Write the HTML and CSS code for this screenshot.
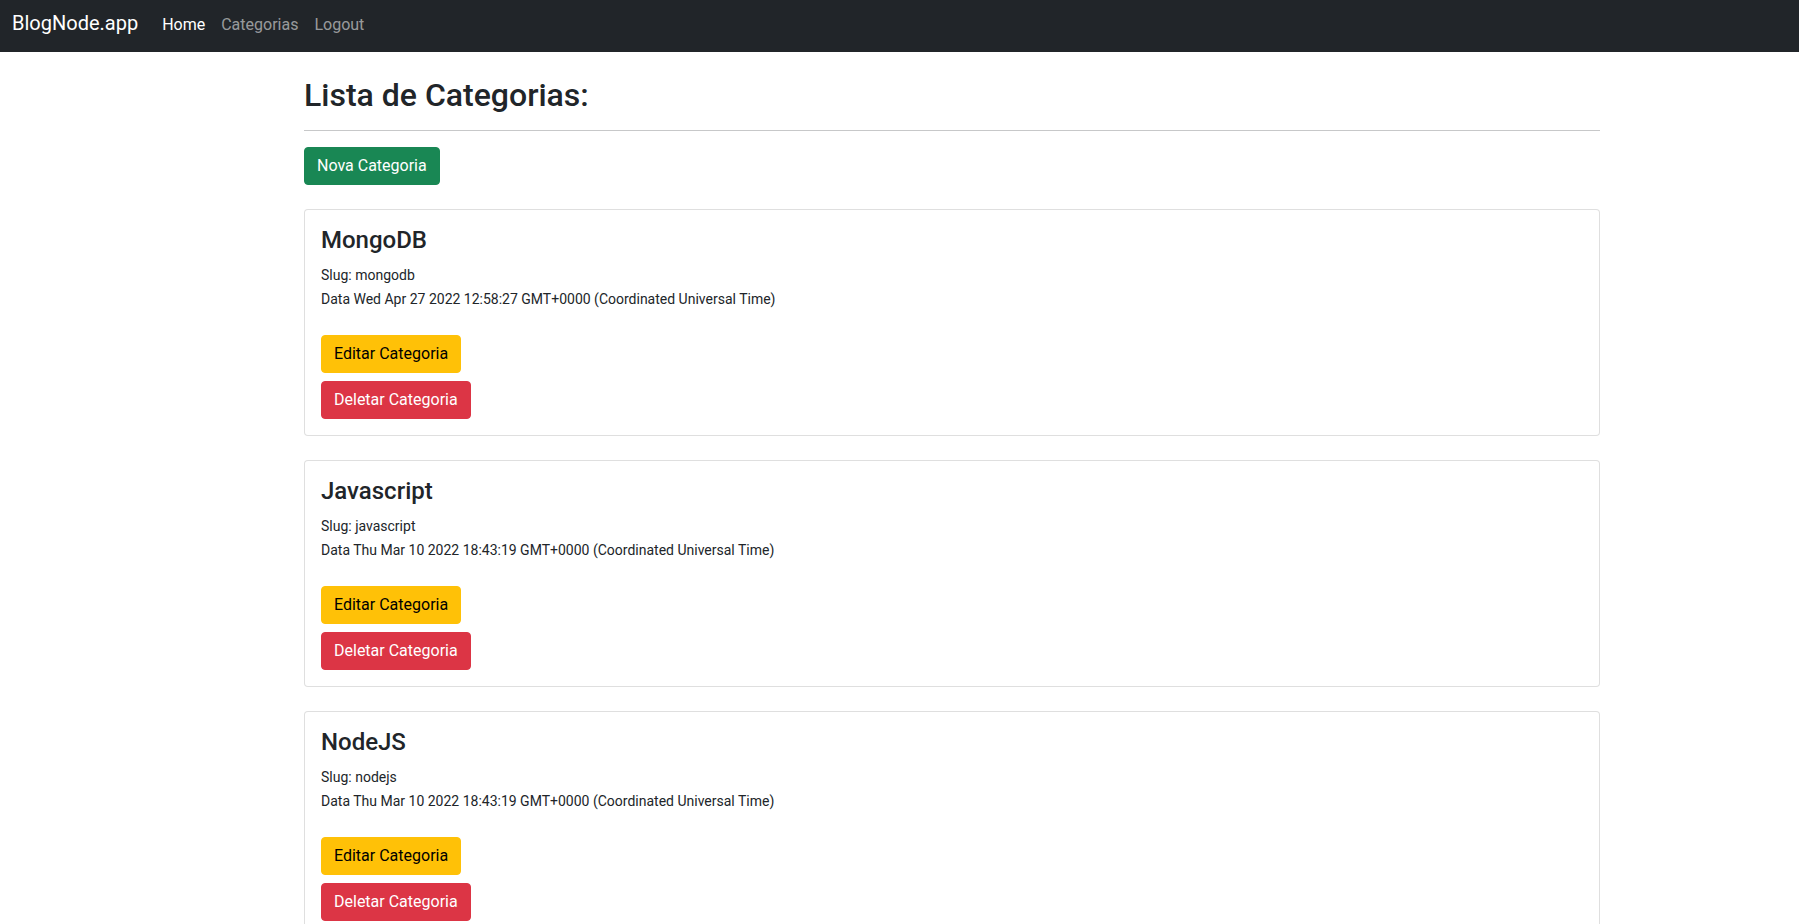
FILE: index.html
```html
<!DOCTYPE html>
<html lang="pt-BR">
<head>
<meta charset="utf-8">
<title>BlogNode.app</title>
<link rel="stylesheet" href="styles.css">
</head>
<body>
<nav class="navbar">
  <a class="brand" href="#">BlogNode.app</a>
  <ul class="nav">
    <li><a class="nav-link active" href="#">Home</a></li>
    <li><a class="nav-link" href="#">Categorias</a></li>
    <li><a class="nav-link" href="#">Logout</a></li>
  </ul>
</nav>

<main class="container">
  <h2 class="page-title">Lista de Categorias:</h2>
  <hr class="divider">
  <a class="btn btn-success" href="#">Nova Categoria</a>

  <div class="card">
    <div class="card-body">
      <h4 class="card-title">MongoDB</h4>
      <p class="meta"><small>Slug: mongodb</small><br><small>Data Wed Apr 27 2022 12:58:27 GMT+0000 (Coordinated Universal Time)</small></p>
      <div class="actions">
        <a class="btn btn-warning" href="#">Editar Categoria</a>
        <button class="btn btn-danger" type="button">Deletar Categoria</button>
      </div>
    </div>
  </div>

  <div class="card">
    <div class="card-body">
      <h4 class="card-title">Javascript</h4>
      <p class="meta"><small>Slug: javascript</small><br><small>Data Thu Mar 10 2022 18:43:19 GMT+0000 (Coordinated Universal Time)</small></p>
      <div class="actions">
        <a class="btn btn-warning" href="#">Editar Categoria</a>
        <button class="btn btn-danger" type="button">Deletar Categoria</button>
      </div>
    </div>
  </div>

  <div class="card">
    <div class="card-body">
      <h4 class="card-title">NodeJS</h4>
      <p class="meta"><small>Slug: nodejs</small><br><small>Data Thu Mar 10 2022 18:43:19 GMT+0000 (Coordinated Universal Time)</small></p>
      <div class="actions">
        <a class="btn btn-warning" href="#">Editar Categoria</a>
        <button class="btn btn-danger" type="button">Deletar Categoria</button>
      </div>
    </div>
  </div>
</main>
</body>
</html>
```
FILE: styles.css
```css
* { box-sizing: border-box; }

body {
  margin: 0;
  font-family: "Roboto", "Liberation Sans", sans-serif;
  font-size: 16px;
  line-height: 1.5;
  color: #212529;
  background: #fff;
}

a { text-decoration: none; }

.navbar {
  display: flex;
  align-items: baseline;
  height: 52px;
  padding: 8px 12px 0;
  background: #212529;
}

.brand {
  font-size: 20px;
  line-height: 30px;
  color: #fff;
  margin-right: 16px;
}

.nav {
  display: flex;
  list-style: none;
  margin: 0;
  padding: 0;
}

.nav-link {
  display: block;
  padding: 0 8px;
  color: rgba(255, 255, 255, 0.55);
}

.nav-link.active { color: #fff; }

.container {
  width: 1296px;
  margin: 24px 0 0 304px;
}

.page-title {
  margin: 0 0 8px;
  font-size: 32px;
  font-weight: 500;
  line-height: 1.2;
}

.divider {
  margin: 16px 0;
  border: 0;
  border-top: 1px solid #212529;
  opacity: 0.25;
}

.btn {
  display: inline-block;
  padding: 6px 12px;
  font-family: inherit;
  font-size: 16px;
  line-height: 1.5;
  border: 1px solid transparent;
  border-radius: 4px;
  cursor: pointer;
}

.btn-success { background: #198754; border-color: #198754; color: #fff; }
.btn-warning { background: #ffc107; border-color: #ffc107; color: #000; }
.btn-danger { background: #dc3545; border-color: #dc3545; color: #fff; }

.card {
  margin-top: 24px;
  border: 1px solid rgba(0, 0, 0, 0.125);
  border-radius: 4px;
  background: #fff;
}

.card-body { padding: 16px; }

.card-title {
  margin: 0 0 8px;
  font-size: 24px;
  font-weight: 500;
  line-height: 1.2;
}

.meta { margin: 0 0 24px; }

.meta small { font-size: 14px; }

.actions {
  display: flex;
  flex-direction: column;
  align-items: flex-start;
  gap: 8px;
}
```
